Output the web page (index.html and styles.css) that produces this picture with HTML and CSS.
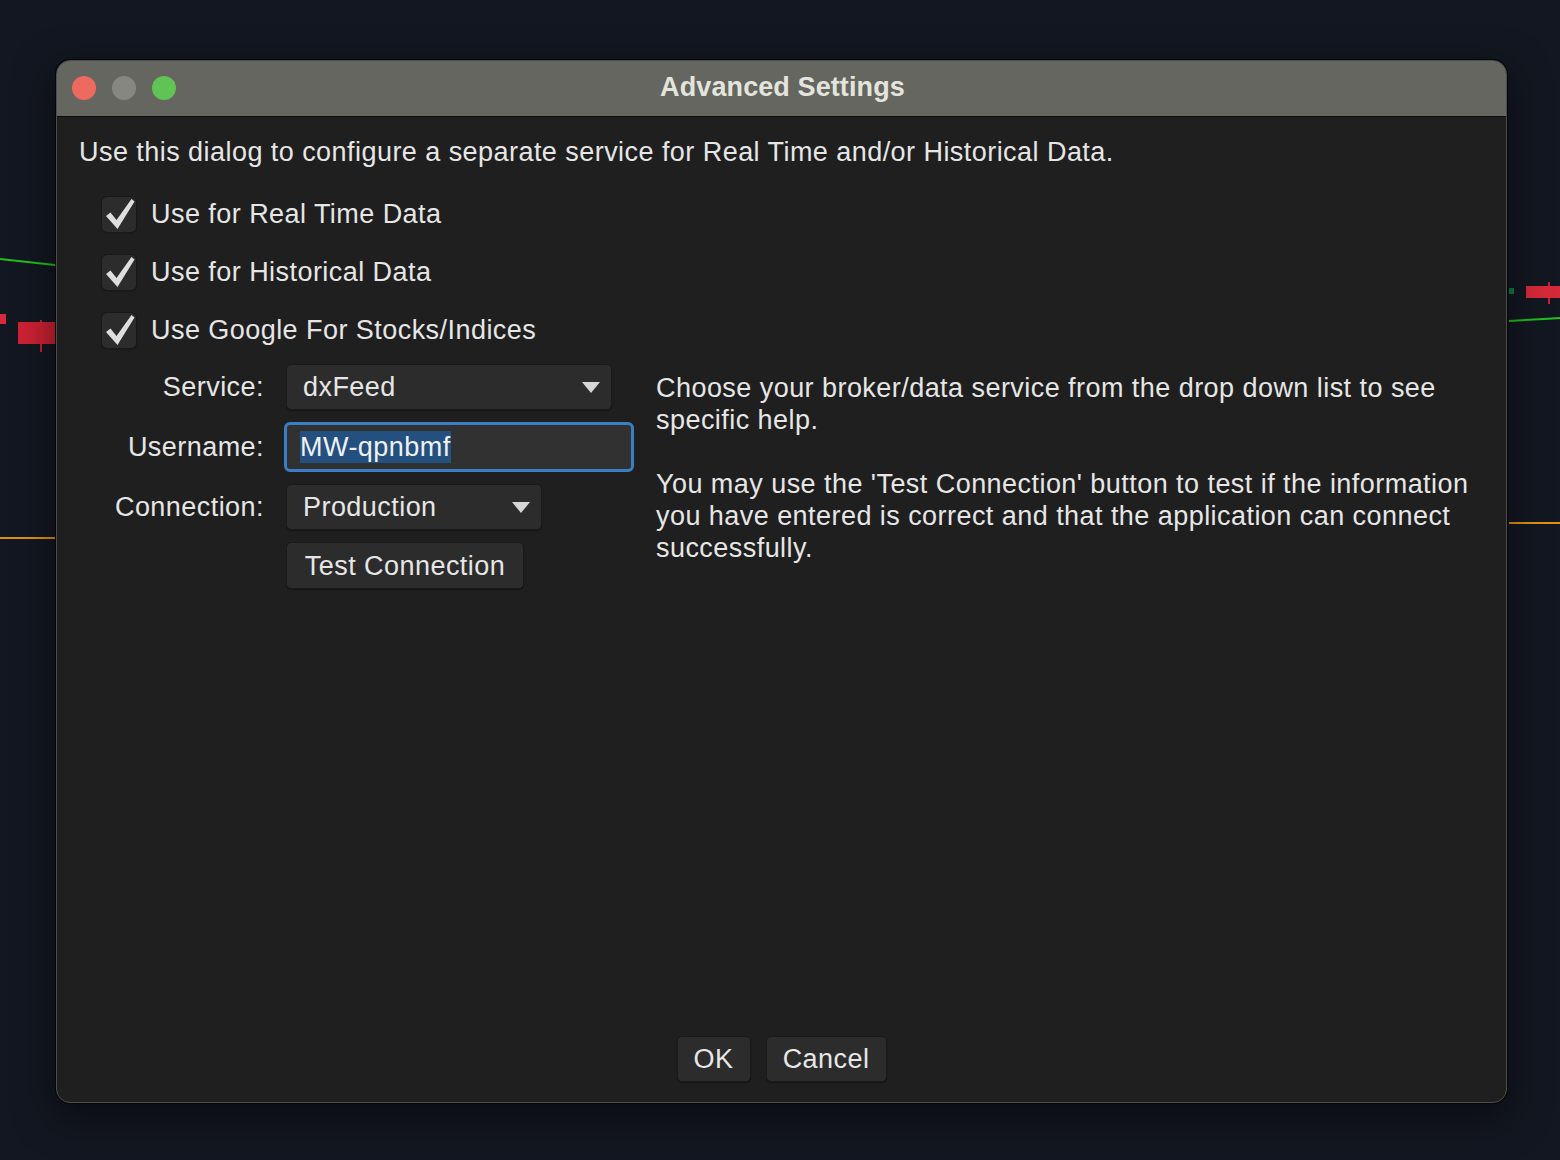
FILE: index.html
```html
<!DOCTYPE html>
<html>
<head>
<meta charset="utf-8">
<link rel="stylesheet" href="styles.css">
</head>
<body>
<svg class="chart" width="1560" height="1160" viewBox="0 0 1560 1160">
  <line x1="0" y1="259" x2="55" y2="265" stroke="#1fc21f" stroke-width="2"/>
  <rect x="0" y="314" width="6" height="10" fill="#d8283a"/>
  <line x1="41" y1="320" x2="41" y2="352" stroke="#c8202f" stroke-width="2"/>
  <rect x="18" y="322" width="38" height="22" fill="#cc2233"/>
  <line x1="0" y1="538" x2="55" y2="538" stroke="#e0920f" stroke-width="2"/>
  <rect x="1509" y="288" width="5" height="6" fill="#137a45"/>
  <line x1="1549" y1="282" x2="1549" y2="304" stroke="#c8202f" stroke-width="2"/>
  <rect x="1526" y="286" width="34" height="12" fill="#d62a3a"/>
  <path d="M1509 321 Q1540 319 1560 318" stroke="#1fc21f" stroke-width="2" fill="none"/>
  <line x1="1509" y1="523" x2="1560" y2="523" stroke="#e0920f" stroke-width="2"/>
</svg>

<div class="window">
  <div class="titlebar">
    <div class="lights">
      <span class="light red"></span>
      <span class="light gray"></span>
      <span class="light green"></span>
    </div>
    <div class="title">Advanced Settings</div>
  </div>
  <div class="content">
    <p class="intro">Use this dialog to configure a separate service for Real Time and/or Historical Data.</p>

    <div class="checks">
      <div class="check-row">
        <span class="checkbox"><svg viewBox="0 0 34 35" width="34" height="35"><path d="M4 19 L8.5 15.5 L14.5 23 L29.5 2 L32.5 4.5 L15.5 32 Z" fill="#dedede"/></svg></span>
        <span class="check-label">Use for Real Time Data</span>
      </div>
      <div class="check-row">
        <span class="checkbox"><svg viewBox="0 0 34 35" width="34" height="35"><path d="M4 19 L8.5 15.5 L14.5 23 L29.5 2 L32.5 4.5 L15.5 32 Z" fill="#dedede"/></svg></span>
        <span class="check-label">Use for Historical Data</span>
      </div>
      <div class="check-row">
        <span class="checkbox"><svg viewBox="0 0 34 35" width="34" height="35"><path d="M4 19 L8.5 15.5 L14.5 23 L29.5 2 L32.5 4.5 L15.5 32 Z" fill="#dedede"/></svg></span>
        <span class="check-label">Use Google For Stocks/Indices</span>
      </div>
    </div>

    <div class="main">
      <div class="form">
        <label class="flabel">Service:</label>
        <div class="select service"><span>dxFeed</span><span class="arrow"></span></div>

        <label class="flabel">Username:</label>
        <div class="input"><span class="sel">MW-qpnbmf</span></div>

        <label class="flabel">Connection:</label>
        <div class="select connection"><span>Production</span><span class="arrow"></span></div>

        <span></span>
        <div class="btn test">Test Connection</div>
      </div>
      <div class="help">
        <p>Choose your broker/data service from the drop down list to see<br>specific help.</p>
        <p>You may use the 'Test Connection' button to test if the information<br>you have entered is correct and that the application can connect<br>successfully.</p>
      </div>
    </div>

    <div class="footer">
      <div class="btn ok">OK</div>
      <div class="btn cancel">Cancel</div>
    </div>
  </div>
</div>
</body>
</html>
```

FILE: styles.css
```css
html, body {
  margin: 0;
  padding: 0;
}
body {
  width: 1560px;
  height: 1160px;
  background: #131721;
  font-family: "Liberation Sans", Arial, sans-serif;
  color: #e6e6e6;
  position: relative;
  overflow: hidden;
}
.chart {
  position: absolute;
  left: 0;
  top: 0;
}
.window {
  position: relative;
  margin-left: 56px;
  margin-top: 60px;
  width: 1451px;
  height: 1043px;
  box-sizing: border-box;
  border: 1px solid #4e4e4e;
  border-radius: 14px;
  overflow: hidden;
  background: #1f1f1f;
  box-shadow: 0 0 0 1px #050608, 0 12px 40px rgba(0,0,0,0.55);
  display: flex;
  flex-direction: column;
}
.titlebar {
  height: 55px;
  flex: none;
  background: #65665f;
  border-bottom: 1px solid #0a0a0a;
  border-top: 1px solid #8a8a84;
  box-sizing: content-box;
  position: relative;
  display: flex;
  align-items: center;
  justify-content: center;
  margin-top: -1px;
}
.lights {
  position: absolute;
  left: 15px;
  top: 15px;
  display: flex;
  gap: 16px;
}
.light {
  width: 24px;
  height: 24px;
  border-radius: 50%;
  display: block;
}
.light.red { background: #ec6a5e; }
.light.gray { background: #878782; }
.light.green { background: #5fc454; }
.title {
  font-weight: bold;
  font-size: 27px;
  color: #e4e4de;
  letter-spacing: 0.1px;
  margin-left: 2px;
  margin-top: -2px;
}
.content {
  flex: 1;
  display: flex;
  flex-direction: column;
  padding: 19px 0 20px 22px;
  font-size: 27px;
  letter-spacing: 0.45px;
}
.intro {
  margin: 0;
  line-height: 32px;
}
.checks {
  margin-top: 17px;
  padding-left: 23px;
  display: flex;
  flex-direction: column;
}
.check-row {
  height: 58px;
  display: flex;
  align-items: center;
}
.checkbox {
  width: 34px;
  height: 35px;
  box-sizing: border-box;
  border-radius: 5px;
  background: #2c2c2c;
  box-shadow: 0 0 0 1px #181818, 0 1px 2px rgba(0,0,0,0.4);
  position: relative;
  flex: none;
}
.checkbox svg {
  position: absolute;
  left: 0;
  top: 0;
  overflow: visible;
}
.check-label {
  margin-left: 15px;
  line-height: 32px;
}
.main {
  margin-top: 5px;
  display: flex;
  align-items: flex-start;
}
.form {
  display: grid;
  grid-template-columns: 185px auto;
  column-gap: 22px;
  row-gap: 12px;
  align-items: center;
  justify-items: start;
}
.flabel {
  justify-self: end;
  line-height: 32px;
}
.select, .btn {
  height: 46px;
  box-sizing: border-box;
  background: #2c2c2c;
  border: 1px solid #1a1a1a;
  border-radius: 5px;
  box-shadow: 0 1px 1px rgba(0,0,0,0.35);
  display: flex;
  align-items: center;
  line-height: 32px;
}
.select {
  justify-content: space-between;
  padding: 0 11px 0 16px;
}
.service { width: 326px; }
.connection { width: 256px; }
.arrow {
  width: 0;
  height: 0;
  border-left: 9px solid transparent;
  border-right: 9px solid transparent;
  border-top: 11px solid #d6d6d6;
  margin-top: 1px;
}
.input {
  margin-left: -2px;
  width: 350px;
  height: 50px;
  box-sizing: border-box;
  border: 3px solid #3a7fc6;
  border-radius: 6px;
  background: #313131;
  display: flex;
  align-items: center;
  padding-left: 13px;
}
.sel {
  background: #24507f;
  line-height: 32px;
  color: #f0f0f0;
}
.btn {
  justify-content: center;
  padding: 0 16px;
}
.test { width: 238px; padding: 0; height: 47px; }
.help {
  margin-left: 22px;
  margin-top: 8px;
}
.help p {
  margin: 0 0 32px 0;
  line-height: 32px;
}
.footer {
  margin-top: auto;
  display: flex;
  justify-content: center;
  gap: 15px;
  margin-left: -22px;
}
.ok { width: 74px; padding: 0; }
.cancel { width: 121px; padding: 0; }
```
